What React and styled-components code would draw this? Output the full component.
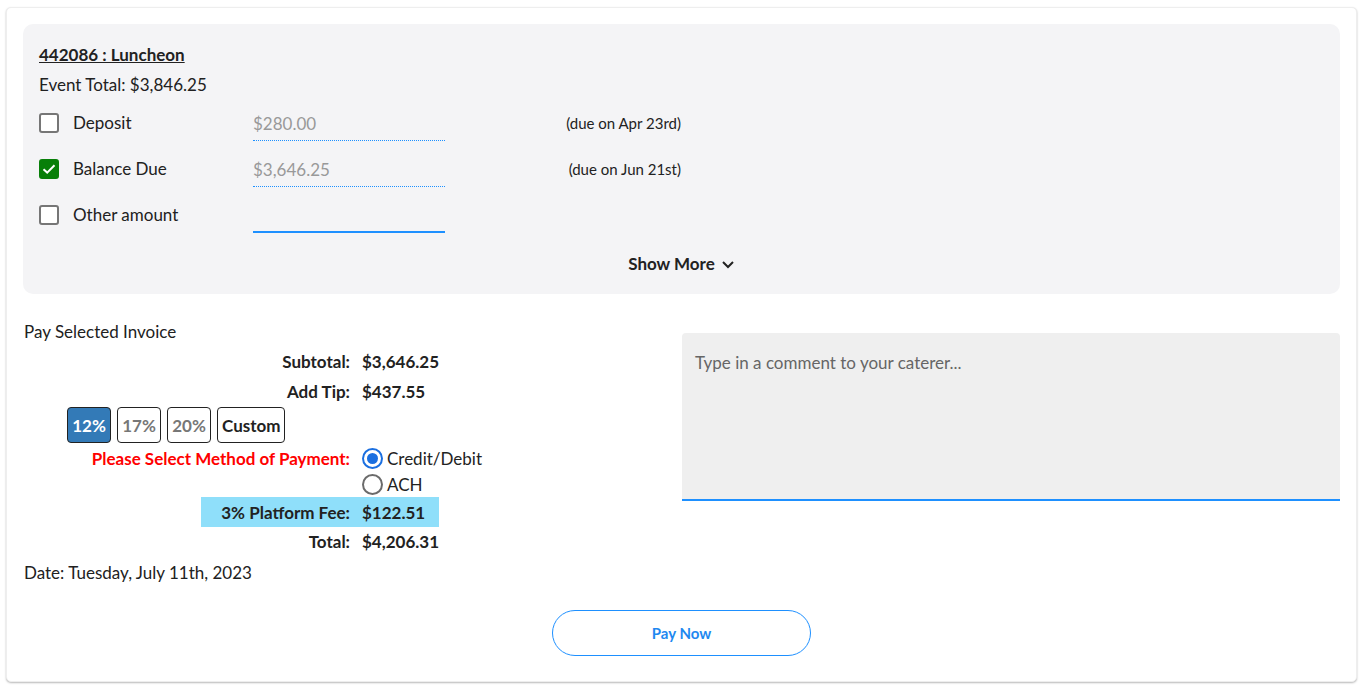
import React, { useState } from "react";
import styled, { createGlobalStyle } from "styled-components";

const Global = createGlobalStyle`
  html, body { margin: 0; padding: 0; background: #fff; }
  body { font-family: Lato, "Open Sans", sans-serif; color: #212121; }
  * { box-sizing: border-box; }
`;

const Card = styled.div`
  margin: 7px 6px;
  border: 1px solid #eee;
  border-radius: 5px;
  box-shadow: 0 1px 2px rgba(0, 0, 0, 0.28);
  padding: 16px 16px 25px;
  background: #fff;
`;

const EventPanel = styled.section`
  background: #f4f4f6;
  border-radius: 10px;
  padding: 19px 16px 18px;
`;

const Title = styled.div`
  font-size: 17px;
  font-weight: 700;
  line-height: 24px;
  text-decoration: underline;
  color: #222;
`;

const EventTotal = styled.div`
  font-size: 17px;
  line-height: 24px;
  margin-top: 6px;
  margin-bottom: 3px;
`;

const PayRow = styled.div`
  display: flex;
  align-items: center;
  height: 46px;
`;

const Box = styled.span`
  width: 20px;
  height: 20px;
  border-radius: 3px;
  flex: none;
  display: flex;
  align-items: center;
  justify-content: center;
  border: 2px solid ${(p) => (p.$checked ? "#087f09" : "#767676")};
  background: ${(p) => (p.$checked ? "#087f09" : "#fff")};
`;

const RowLabel = styled.span`
  width: 180px;
  margin-left: 14px;
  font-size: 17px;
  line-height: 24px;
`;

const AmountInput = styled.input`
  width: 192px;
  height: 33px;
  margin-top: 2px;
  border: none;
  border-bottom: ${(p) => (p.$editable ? "2px solid #1e90ff" : "1px dotted #1e90ff")};
  background: transparent;
  font-family: inherit;
  font-size: 17px;
  color: #999;
  padding: 0;
  outline: none;
  &::placeholder { color: #999; }
`;

const DueNote = styled.span`
  width: 236px;
  text-align: right;
  font-size: 15px;
  color: #222;
`;

const ShowMore = styled.button`
  display: flex;
  align-items: center;
  gap: 6px;
  margin: 14px auto 0;
  border: none;
  background: none;
  padding: 0;
  font-family: inherit;
  font-size: 17px;
  font-weight: 700;
  line-height: 24px;
  color: #222;
`;

const Bottom = styled.div`
  display: grid;
  grid-template-columns: 1fr 658px;
  column-gap: 16px;
  padding-top: 26px;
`;

const LeftCol = styled.div`
  padding-left: 1px;
`;

const Heading = styled.div`
  font-size: 17px;
  line-height: 24px;
  margin-bottom: 2px;
`;

const SumRow = styled.div`
  display: flex;
  align-items: center;
  height: ${(p) => p.$h || 30}px;
  font-size: 17px;
  font-weight: 700;
`;

const SumLabel = styled.span`
  width: 326px;
  text-align: right;
  color: ${(p) => p.$color || "#222"};
  align-self: ${(p) => (p.$top ? "flex-start" : "center")};
  margin-top: ${(p) => (p.$top ? "3px" : "0")};
`;

const SumValue = styled.span`
  margin-left: 12px;
  color: #222;
`;

const FeeRow = styled.div`
  display: flex;
  align-items: center;
  height: 30px;
  width: 238px;
  margin-left: 177px;
  background: #8fdffa;
  font-size: 17px;
  font-weight: 700;
  color: #222;
`;

const FeeLabel = styled.span`
  width: 149px;
  text-align: right;
`;

const TipRow = styled.div`
  display: flex;
  gap: 6px;
  padding-left: 43px;
  margin: 1px 0 2px;
`;

const TipBtn = styled.button`
  height: 36px;
  min-width: 44px;
  padding: 0 4px;
  border: 1px solid #222;
  border-radius: 4px;
  font-family: inherit;
  font-size: 17px;
  font-weight: 700;
  background: ${(p) => (p.$active ? "#337ab7" : "#fff")};
  color: ${(p) => (p.$active ? "#fff" : p.$muted ? "#777" : "#222")};
`;

const Radios = styled.div`
  display: flex;
  flex-direction: column;
  margin-left: 12px;
`;

const RadioLine = styled.label`
  display: flex;
  align-items: center;
  height: 26px;
  font-size: 17px;
  font-weight: 400;
  color: #222;
  gap: 4px;
`;

const RadioDot = styled.span`
  width: 21px;
  height: 21px;
  border-radius: 50%;
  border: 2px solid ${(p) => (p.$on ? "#1b6fe0" : "#6b6b6b")};
  display: flex;
  align-items: center;
  justify-content: center;
  &::after {
    content: "";
    width: 11px;
    height: 11px;
    border-radius: 50%;
    background: ${(p) => (p.$on ? "#1b6fe0" : "transparent")};
  }
`;

const DateLine = styled.div`
  font-size: 17px;
  line-height: 24px;
  margin-top: 6px;
`;

const Comment = styled.textarea`
  margin-top: 13px;
  height: 168px;
  width: 100%;
  resize: none;
  border: none;
  border-bottom: 2px solid #1e90ff;
  border-radius: 4px 4px 0 0;
  background: #efefef;
  padding: 19px 13px;
  font-family: inherit;
  font-size: 17px;
  color: #333;
  outline: none;
  &::placeholder { color: #666; }
`;

const Footer = styled.div`
  display: flex;
  justify-content: center;
  margin-top: 25px;
`;

const PayNow = styled.button`
  width: 259px;
  height: 46px;
  border-radius: 23px;
  border: 1px solid #1e90ff;
  background: #fff;
  color: #1e88f0;
  font-family: inherit;
  font-size: 15px;
  font-weight: 700;
`;

const Check = () => (
  <svg width="16" height="16" viewBox="0 0 16 16">
    <path d="M2.5 8.2 L6.2 11.6 L13.5 4.2" fill="none" stroke="#fff" strokeWidth="2" />
  </svg>
);

const Chevron = () => (
  <svg width="14" height="14" viewBox="0 0 14 14">
    <path d="M2 5 L7 10 L12 5" fill="none" stroke="#222" strokeWidth="2" />
  </svg>
);

const rows = [
  { label: "Deposit", value: "$280.00", due: "(due on Apr 23rd)", checked: false },
  { label: "Balance Due", value: "$3,646.25", due: "(due on Jun 21st)", checked: true },
  { label: "Other amount", value: "", due: "", checked: false, editable: true },
];

export default function App() {
  const [tip, setTip] = useState("12%");
  const [method, setMethod] = useState("card");
  return (
    <>
      <Global />
      <Card>
        <EventPanel>
          <Title>442086 : Luncheon</Title>
          <EventTotal>Event Total: $3,846.25</EventTotal>
          {rows.map((r) => (
            <PayRow key={r.label}>
              <Box $checked={r.checked}>{r.checked && <Check />}</Box>
              <RowLabel>{r.label}</RowLabel>
              <AmountInput
                $editable={r.editable}
                readOnly={!r.editable}
                defaultValue={r.value}
              />
              <DueNote>{r.due}</DueNote>
            </PayRow>
          ))}
          <ShowMore>
            Show More <Chevron />
          </ShowMore>
        </EventPanel>

        <Bottom>
          <LeftCol>
            <Heading>Pay Selected Invoice</Heading>
            <SumRow>
              <SumLabel>Subtotal:</SumLabel>
              <SumValue>$3,646.25</SumValue>
            </SumRow>
            <SumRow>
              <SumLabel>Add Tip:</SumLabel>
              <SumValue>$437.55</SumValue>
            </SumRow>
            <TipRow>
              {["12%", "17%", "20%", "Custom"].map((t) => (
                <TipBtn
                  key={t}
                  $active={tip === t}
                  $muted={t !== "Custom" && tip !== t}
                  onClick={() => setTip(t)}
                >
                  {t}
                </TipBtn>
              ))}
            </TipRow>
            <SumRow $h={52}>
              <SumLabel $color="#f00" $top>
                Please Select Method of Payment:
              </SumLabel>
              <Radios>
                <RadioLine onClick={() => setMethod("card")}>
                  <RadioDot $on={method === "card"} />
                  Credit/Debit
                </RadioLine>
                <RadioLine onClick={() => setMethod("ach")}>
                  <RadioDot $on={method === "ach"} />
                  ACH
                </RadioLine>
              </Radios>
            </SumRow>
            <FeeRow>
              <FeeLabel>3% Platform Fee:</FeeLabel>
              <SumValue>$122.51</SumValue>
            </FeeRow>
            <SumRow $h={28}>
              <SumLabel>Total:</SumLabel>
              <SumValue>$4,206.31</SumValue>
            </SumRow>
            <DateLine>Date: Tuesday, July 11th, 2023</DateLine>
          </LeftCol>
          <div>
            <Comment placeholder="Type in a comment to your caterer..." />
          </div>
        </Bottom>

        <Footer>
          <PayNow>Pay Now</PayNow>
        </Footer>
      </Card>
    </>
  );
}
